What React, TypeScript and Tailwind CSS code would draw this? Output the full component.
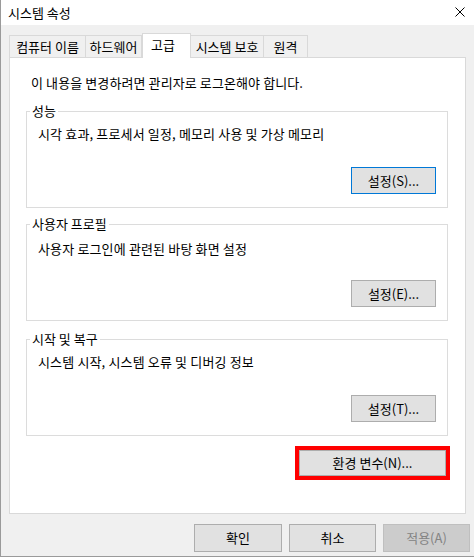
import React from "react";

const font = { fontFamily: '"Noto Sans CJK KR", "Noto Sans", sans-serif' };

const tabs = [
  { label: "컴퓨터 이름", w: "w-[77px]" },
  { label: "하드웨어", w: "w-[57px]" },
  { label: "고급", w: "w-[49px]", active: true },
  { label: "시스템 보호", w: "w-[74px]" },
  { label: "원격", w: "w-[45px]" },
];

const WinButton = ({ label, focused, disabled, className = "" }: any) => (
  <button
    type="button"
    className={`flex items-center justify-center text-[13px] leading-[16px] border
      ${disabled ? "bg-[#cccccc] border-[#bfbfbf] text-[#838383]" : "bg-[#e1e1e1] text-black"}
      ${focused ? "border-[#0078d7]" : disabled ? "" : "border-[#adadad]"} ${className}`}
  >
    {label}
  </button>
);

// 그룹 박스 (성능 / 사용자 프로필 / 시작 및 복구)
const GroupBox = ({ title, desc, button, focused, className = "", descPad = "pt-[14px]" }: any) => (
  <div className={`relative ml-[16px] w-[422px] h-[97px] border border-[#dcdcdc] flex flex-col ${className}`}>
    <span className="absolute -top-[9px] left-[3px] bg-white px-[2px] text-[13px] leading-[16px] text-black">
      {title}
    </span>
    <div className={`pl-[11px] ${descPad} text-[13px] leading-[16px] tracking-[0.15px] text-black`}>{desc}</div>
    <WinButton label={button} focused={focused} className="self-end mt-auto mb-[13px] mr-[11px] w-[85px] h-[27px]" />
  </div>
);

export default function App() {
  return (
    <div style={font} className="w-[474px] h-[560px] bg-white overflow-hidden">
      <div className="w-[474px] h-[557px] bg-[#f0f0f0] border-l border-b border-[#9a9a9a] flex flex-col">
        {/* 제목 표시줄 */}
        <div className="h-[25px] bg-white flex items-center justify-between pl-[7px] pr-[9px]">
          <span className="text-[13px] leading-[16px] text-black">시스템 속성</span>
          <svg width="10" height="10" viewBox="0 0 10 10" className="mb-[1px]">
            <path d="M0.5 0.5 L9.5 9.5 M9.5 0.5 L0.5 9.5" stroke="#000" strokeWidth="1" fill="none" />
          </svg>
        </div>

        {/* 탭 */}
        <div className="mt-[8px] h-[24px] pl-[8px] flex items-end relative z-10">
          {tabs.map((t) =>
            t.active ? (
              <div
                key={t.label}
                className={`${t.w} h-[25px] -mb-[1px] bg-white border border-b-0 border-[#d9d9d9] flex items-center pl-[8px] pb-[3px] text-[13px] leading-[16px] text-black`}
              >
                {t.label}
              </div>
            ) : (
              <div
                key={t.label}
                className={`${t.w} h-[22px] border border-b-0 border-[#d9d9d9] -ml-px first:ml-0 flex items-center justify-center text-[13px] leading-[16px] text-black`}
              >
                {t.label}
              </div>
            )
          )}
        </div>

        {/* 탭 패널 */}
        <div className="mx-[8px] h-[457px] bg-white border border-[#d9d9d9] flex flex-col pt-[17px]">
          <div className="pl-[21px] text-[13px] leading-[16px] tracking-[0.1px] text-black">
            이 내용을 변경하려면 관리자로 로그온해야 합니다.
          </div>

          <GroupBox
            className="mt-[20px]"
            title="성능"
            desc="시각 효과, 프로세서 일정, 메모리 사용 및 가상 메모리"
            button="설정(S)..."
            focused
          />
          <GroupBox
            className="mt-[16px]"
            descPad="pt-[16px]"
            title="사용자 프로필"
            desc="사용자 로그인에 관련된 바탕 화면 설정"
            button="설정(E)..."
          />
          <GroupBox
            className="mt-[18px]"
            title="시작 및 복구"
            desc="시스템 시작, 시스템 오류 및 디버깅 정보"
            button="설정(T)..."
          />

          <div className="self-end mr-[15px] mt-[10px] w-[155px] h-[34px] border-4 border-[#ff0000]">
            <WinButton label="환경 변수(N)..." className="w-full h-full" />
          </div>
        </div>

        {/* 하단 버튼 */}
        <div className="mt-[10px] flex justify-end gap-[7px] pr-[4px]">
          <WinButton label="확인" className="w-[88px] h-[28px]" />
          <WinButton label="취소" className="w-[87px] h-[28px]" />
          <WinButton label="적용(A)" disabled className="w-[87px] h-[28px]" />
        </div>
      </div>
    </div>
  );
}
